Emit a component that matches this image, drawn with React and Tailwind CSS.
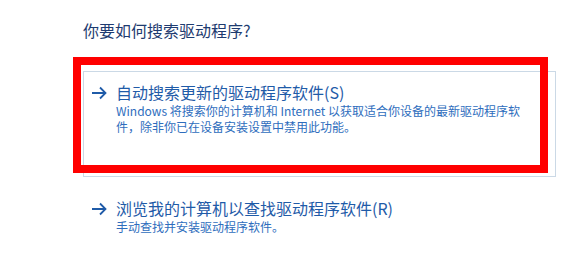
import React from 'react';

const font = { fontFamily: '"Noto Sans CJK SC", "Noto Sans", sans-serif' };

const Arrow = () => (
  <svg width="16" height="14" viewBox="0 0 16 14" className="shrink-0 mt-[5px]">
    <path d="M1 7 H14.5 M9 1.5 L14.5 7 L9 12.5" fill="none" stroke="#1f5ba8" strokeWidth="1.8" />
  </svg>
);

const Option = ({ title, children, bordered }) => (
  <div
    className={`flex gap-[9px] w-[473px] pl-[7px] pt-[9px] border ${
      bordered ? 'border-[#cbd9e6] h-[106px]' : 'border-transparent'
    }`}
  >
    <Arrow />
    <div className="flex flex-col">
      <div className="text-[16px] leading-[22px] text-[#1f5ba8] whitespace-nowrap">{title}</div>
      <div className="text-[12px] leading-[16px] text-[#2e6dbd] whitespace-nowrap">{children}</div>
    </div>
  </div>
);

export default function App() {
  return (
    <div className="relative w-[578px] h-[266px] bg-white overflow-hidden" style={font}>
      <div className="pl-[83px] pt-[19px]">
        <div className="text-[16px] leading-[22px] text-[#1e3b70]">你要如何搜索驱动程序?</div>

        <div className="mt-[30px] flex flex-col gap-[10px]">
          <Option bordered title="自动搜索更新的驱动程序软件(S)">
            Windows 将搜索你的计算机和 Internet 以获取适合你设备的最新驱动程序软
            <br />
            件，除非你已在设备安装设置中禁用此功能。
          </Option>
          <Option title="浏览我的计算机以查找驱动程序软件(R)">手动查找并安装驱动程序软件。</Option>
        </div>
      </div>

      {/* red annotation box */}
      <div className="absolute left-[73px] top-[57px] w-[475px] h-[116px] border-[8px] border-[#ff0000] pointer-events-none" />
    </div>
  );
}
